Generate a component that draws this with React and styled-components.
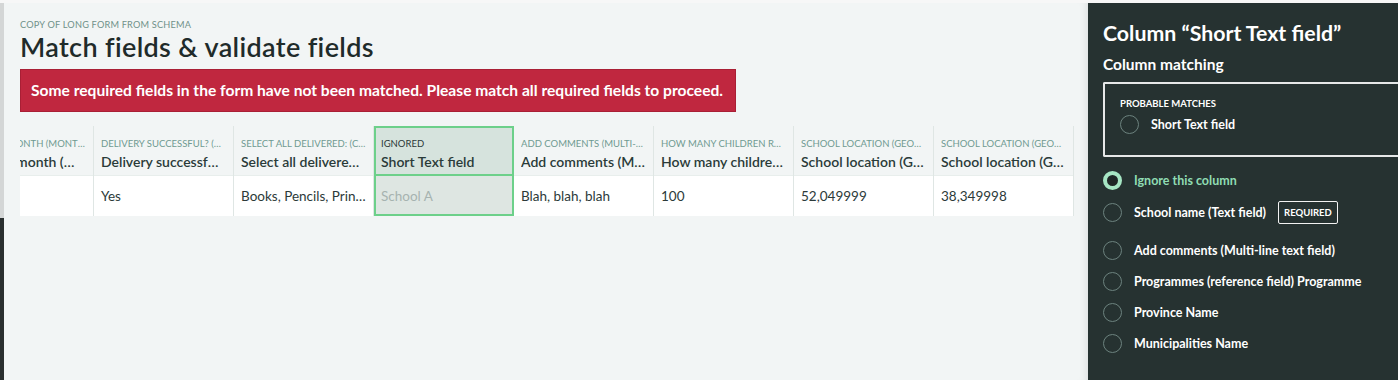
import React from 'react';
import styled, { createGlobalStyle } from 'styled-components';

const GlobalStyle = createGlobalStyle`
  html, body {
    margin: 0;
    padding: 0;
    background: #f8f9f9;
  }
  body {
    font-family: Lato, "Open Sans", sans-serif;
    -webkit-font-smoothing: antialiased;
  }
`;

const columns = [
  { label: 'DELIVERY MONTH (MONTH)', name: 'Delivery month (Month)', value: '' },
  { label: 'DELIVERY SUCCESSFUL? (SELECT)', name: 'Delivery successful? (Select)', value: 'Yes' },
  { label: 'SELECT ALL DELIVERED: (CHECKBOX)', name: 'Select all delivered: (Checkbox)', value: 'Books, Pencils, Printed material' },
  { label: 'IGNORED', name: 'Short Text field', value: 'School A', selected: true },
  { label: 'ADD COMMENTS (MULTI-LINE)', name: 'Add comments (Multi-line)', value: 'Blah, blah, blah' },
  { label: 'HOW MANY CHILDREN RECEIVED', name: 'How many children received', value: '100' },
  { label: 'SCHOOL LOCATION (GEOGRAPHIC)', name: 'School location (Geographic)', value: '52,049999' },
  { label: 'SCHOOL LOCATION (GEOGRAPHIC)', name: 'School location (Geographic)', value: '38,349998' },
];

const options = [
  { label: 'School name (Text field)', required: true },
  { label: 'Add comments (Multi-line text field)' },
  { label: 'Programmes (reference field) Programme' },
  { label: 'Province Name' },
  { label: 'Municipalities Name' },
];

function App() {
  return (
    <>
      <GlobalStyle />
      <Screen>
        <Backdrop>
          <BackdropTop />
          <BackdropBottom />
        </Backdrop>
        <Main>
          <Eyebrow>Copy of long form from schema</Eyebrow>
          <Title>Match fields &amp; validate fields</Title>
          <ErrorBanner>
            Some required fields in the form have not been matched. Please match all required fields to proceed.
          </ErrorBanner>
          <TableViewport>
            <Table>
              {columns.map((col, i) => (
                <Column key={i} $selected={col.selected} $first={i === 0}>
                  <HeadCell $selected={col.selected}>
                    <HeadLabel $selected={col.selected}>{col.label}</HeadLabel>
                    <HeadName>{col.name}</HeadName>
                  </HeadCell>
                  <BodyCell $selected={col.selected}>{col.value}</BodyCell>
                </Column>
              ))}
            </Table>
          </TableViewport>
        </Main>
        <Sidebar>
          <SideTitle>Column “Short Text field”</SideTitle>
          <SideSubtitle>Column matching</SideSubtitle>
          <MatchBox>
            <MatchHeading>Probable matches</MatchHeading>
            <Option>
              <Radio />
              <OptionLabel>Short Text field</OptionLabel>
            </Option>
          </MatchBox>
          <OptionList>
            <Option>
              <Radio $checked />
              <OptionLabel $active>Ignore this column</OptionLabel>
            </Option>
            {options.map((opt) => (
              <Option key={opt.label} $tall={opt.required}>
                <Radio />
                <OptionLabel>{opt.label}</OptionLabel>
                {opt.required && <RequiredBadge>Required</RequiredBadge>}
              </Option>
            ))}
          </OptionList>
        </Sidebar>
      </Screen>
    </>
  );
}

const Screen = styled.div`
  display: flex;
  height: 380px;
  width: 1398px;
  overflow: hidden;
  border-top: 3px solid #f7f7f7;
  box-sizing: border-box;
`;

const Backdrop = styled.div`
  width: 4px;
  flex: none;
  display: flex;
  flex-direction: column;
`;

const BackdropTop = styled.div`
  height: 215px;
  background: #d4d6d6;
`;

const BackdropBottom = styled.div`
  flex: 1;
  background: #2a2f2f;
`;

const Main = styled.div`
  flex: 1;
  min-width: 0;
  background: #f2f5f5;
  padding: 15px 0 0 16px;
  box-shadow: inset -8px 0 10px -8px rgba(0, 0, 0, 0.12);
`;

const Eyebrow = styled.div`
  font-size: 9.2px;
  line-height: 13px;
  text-transform: uppercase;
  color: #6f9189;
  letter-spacing: 0.2px;
`;

const Title = styled.h1`
  margin: -1px 0 0;
  font-size: 27px;
  line-height: 34px;
  font-weight: 600;
  color: #1f2b2a;
  letter-spacing: 0.35px;
`;

const ErrorBanner = styled.div`
  margin-top: 5px;
  display: inline-block;
  background: #c0273f;
  border: 1px solid #a91f35;
  color: #fff;
  font-weight: 700;
  font-size: 15.6px;
  line-height: 41px;
  padding: 0 12px 0 10px;
`;

const TableViewport = styled.div`
  margin-top: 14px;
  width: 1054px;
  overflow: hidden;
`;

const Table = styled.div`
  display: flex;
  border-right: 1px solid #dde5e3;
`;

const Column = styled.div`
  width: 139px;
  flex: none;
  border-right: 1px solid #dfe6e4;
  margin-left: ${(p) => (p.$first ? '-66px' : '0')};
  ${(p) =>
    p.$selected &&
    `
    outline: 2px solid #6dd08a;
    outline-offset: -2px;
    position: relative;
    z-index: 1;
  `}
`;

const HeadCell = styled.div`
  height: 50px;
  box-sizing: border-box;
  padding: 11px 7px 0 7px;
  background: ${(p) => (p.$selected ? '#d6e3dd' : '#f2f5f5')};
  border-bottom: ${(p) => (p.$selected ? '2px solid #6dd08a' : '1px solid #e8eeec')};
`;

const HeadLabel = styled.div`
  font-size: 9.5px;
  line-height: 13px;
  color: ${(p) => (p.$selected ? '#2b3837' : '#6f9a91')};
  white-space: nowrap;
  overflow: hidden;
  text-overflow: ellipsis;
`;

const HeadName = styled.div`
  margin-top: 2px;
  font-size: 14px;
  line-height: 19px;
  font-weight: 600;
  color: #2a3b39;
  white-space: nowrap;
  overflow: hidden;
  text-overflow: ellipsis;
`;

const BodyCell = styled.div`
  height: 40px;
  box-sizing: border-box;
  padding: 0 7px;
  line-height: 41px;
  font-size: 13.5px;
  color: ${(p) => (p.$selected ? '#a6b3b0' : '#2c3a39')};
  background: ${(p) => (p.$selected ? '#dee6e2' : '#ffffff')};
  white-space: nowrap;
  overflow: hidden;
  text-overflow: ellipsis;
`;

const Sidebar = styled.aside`
  width: 310px;
  flex: none;
  background: #263231;
  padding: 17px 0 0 15px;
  box-sizing: border-box;
  color: #fff;
`;

const SideTitle = styled.h2`
  margin: 0;
  font-size: 21.3px;
  line-height: 27px;
  font-weight: 700;
`;

const SideSubtitle = styled.h3`
  margin: 7px 0 0;
  font-size: 15.5px;
  line-height: 20px;
  font-weight: 700;
`;

const MatchBox = styled.div`
  margin-top: 8px;
  margin-right: -4px;
  border: 2px solid #e6e8e8;
  border-right: none;
  border-radius: 2px 0 0 2px;
  height: 75px;
  box-sizing: border-box;
  padding: 14px 0 0 15px;
`;

const MatchHeading = styled.div`
  font-size: 9.5px;
  line-height: 12px;
  font-weight: 700;
  text-transform: uppercase;
  margin-bottom: 5px;
`;

const OptionList = styled.div`
  margin-top: 14px;
  display: flex;
  flex-direction: column;
  gap: 12.3px;
`;

const Option = styled.label`
  display: flex;
  align-items: center;
  gap: 12px;
  min-height: ${(p) => (p.$tall ? '23px' : '19px')};
  margin: ${(p) => (p.$tall ? '-1px 0 4px' : '0')};
`;

const Radio = styled.span`
  width: 19px;
  height: 19px;
  flex: none;
  box-sizing: border-box;
  border-radius: 50%;
  border: ${(p) => (p.$checked ? '4px solid #a6e6c4' : '1.5px solid #6c827e')};
  background: ${(p) => (p.$checked ? '#1e2726' : 'transparent')};
`;

const OptionLabel = styled.span`
  font-size: 12.5px;
  font-weight: 700;
  color: ${(p) => (p.$active ? '#8fdcb3' : '#ffffff')};
`;

const RequiredBadge = styled.span`
  border: 1px solid #f2f2f2;
  border-radius: 2px;
  font-size: 9.5px;
  font-weight: 700;
  text-transform: uppercase;
  padding: 5px 5px;
  line-height: 11px;
`;

export default App;
